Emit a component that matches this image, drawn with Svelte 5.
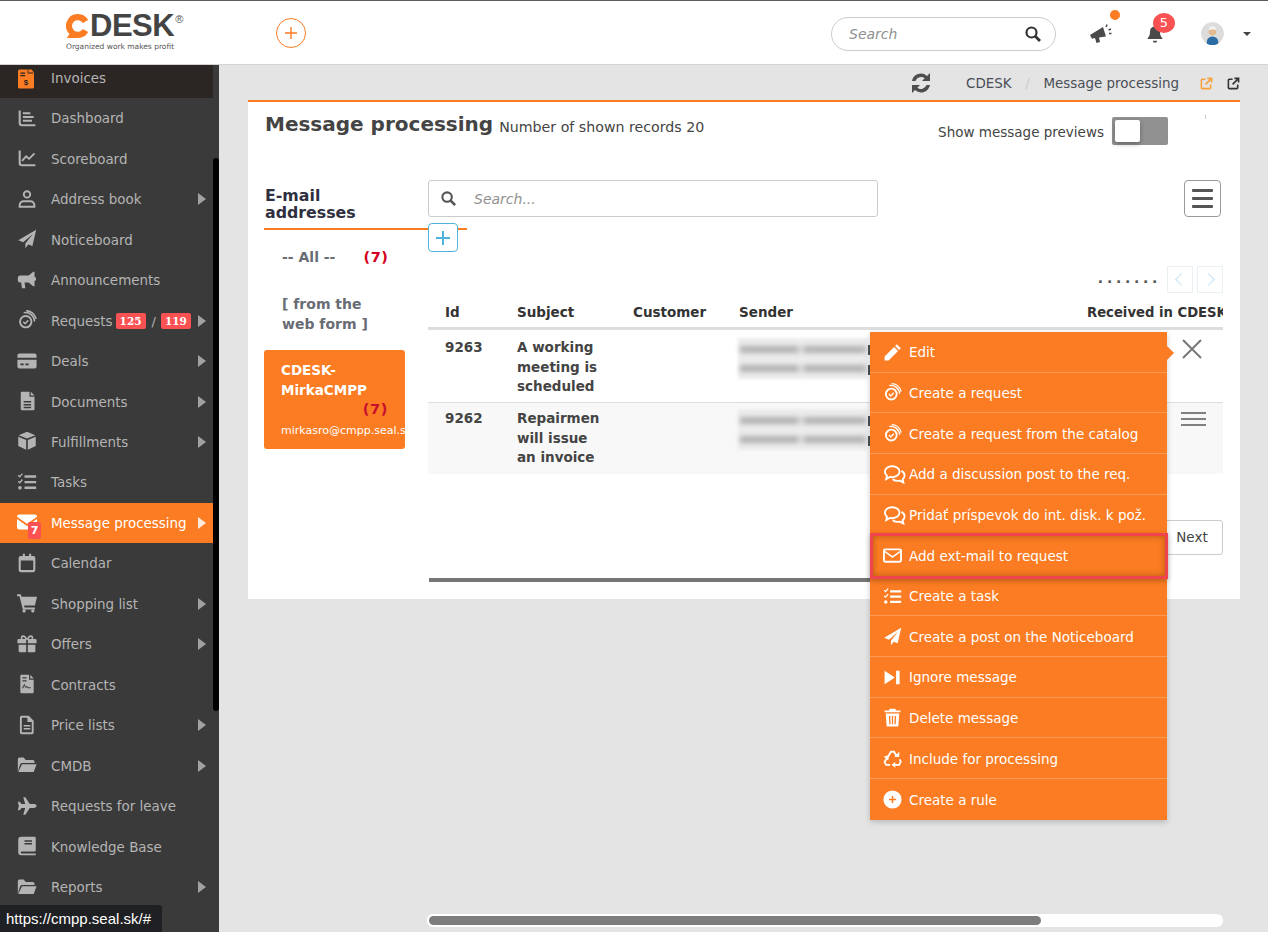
<script>
  const nav = [
    ['Dashboard', 'dash', 0], ['Scoreboard', 'score', 0], ['Address book', 'user', 1], ['Noticeboard', 'plane', 0],
    ['Announcements', 'mega', 0], ['Requests', 'req', 1], ['Deals', 'card', 1], ['Documents', 'doc', 1],
    ['Fulfillments', 'box', 1], ['Tasks', 'tasks', 0], ['Message processing', 'mail', 1], ['Calendar', 'cal', 0],
    ['Shopping list', 'cart', 1], ['Offers', 'gift', 1], ['Contracts', 'contract', 0], ['Price lists', 'pricelist', 1],
    ['CMDB', 'folder', 1], ['Requests for leave', 'jet', 0], ['Knowledge Base', 'book', 0], ['Reports', 'folder', 1]
  ];
  const menu = [
    ['Edit', 'pencil'], ['Create a request', 'req'], ['Create a request from the catalog', 'req'],
    ['Add a discussion post to the req.', 'chat'], ['Pridať príspevok do int. disk. k pož.', 'chat'],
    ['Add ext-mail to request', 'mailo'], ['Create a task', 'tasks'], ['Create a post on the Noticeboard', 'plane'],
    ['Ignore message', 'skip'], ['Delete message', 'trash'], ['Include for processing', 'recycle'], ['Create a rule', 'plus']
  ];
</script>

{#snippet icon(n)}
  <svg class="ic i-{n}" viewBox="0 0 24 24" fill="currentColor" aria-hidden="true">
    {#if n === 'dash'}
      <path d="M2 3h2.500v15a1.500 1.500 0 0 0 1.500 1.500h16v2.500H6a4 4 0 0 1-4-4z"/><path d="M7 5h9v2.500H7zM7 9.500h13V12H7zM7 14h11v2.500H7z"/>
    {:else if n === 'score'}
      <path d="M2 3h2.500v15a1.500 1.500 0 0 0 1.500 1.500h16v2.500H6a4 4 0 0 1-4-4z"/><path d="M6 15.500l5-5.500 3.500 3L21 6.500" fill="none" stroke="currentColor" stroke-width="2.200"/>
    {:else if n === 'user'}
      <path fill-rule="evenodd" d="M12 1.500a5 5 0 1 1 0 10 5 5 0 0 1 0-10zm0 2.300a2.700 2.700 0 1 0 0 5.400 2.700 2.700 0 0 0 0-5.400zM8 13.500h8a6 6 0 0 1 6 6v3H2v-3a6 6 0 0 1 6-6zm0 2.300a3.700 3.700 0 0 0-3.600 4.400h15.200a3.700 3.700 0 0 0-3.600-4.400z"/>
    {:else if n === 'plane'}
      <path d="M23 1 1.500 13.500l6 2.500L19 6 10 17.500V23l3.500-4.500 5 2z"/>
    {:else if n === 'mega'}
      <path d="M21 2h-1.500L14 6.500H4a3 3 0 0 0-3 3v2.500a3 3 0 0 0 3 3h1l1 7h4l-1-7h5l5.500 4.500H21v-6.200a2.700 2.700 0 0 0 0-5.200z"/>
    {:else if n === 'req'}
      <path fill-rule="evenodd" d="M10.500 6a8 8 0 1 1 0 16 8 8 0 0 1 0-16zm0 2.300a5.700 5.700 0 1 0 0 11.400 5.700 5.700 0 0 0 0-11.400z"/><path d="M7.500 14l2.300 2.300 3.800-4" fill="none" stroke="currentColor" stroke-width="1.800"/><path d="M8 3.200a11 11 0 0 1 13 10.500M11 .8a13 13 0 0 1 12 10" fill="none" stroke="currentColor" stroke-width="1.800"/>
    {:else if n === 'card'}
      <path fill-rule="evenodd" d="M3 3h18a2.500 2.500 0 0 1 2.500 2.500V8H.5V5.500A2.500 2.500 0 0 1 3 3zM.5 10.500h23v8A2.500 2.500 0 0 1 21 21H3a2.500 2.500 0 0 1-2.500-2.500zM4 15v2h4v-2zm6 0v2h4v-2z"/>
    {:else if n === 'doc'}
      <path fill-rule="evenodd" d="M6 1h9v6h6v14.500a1.500 1.500 0 0 1-1.500 1.500h-13.500a1.500 1.500 0 0 1-1.500-1.500V2.500A1.500 1.500 0 0 1 6 1zm2 11v1.800h9V12zm0 3.500v1.800h9v-1.800zm0 3.500v1.800h9V19z"/><path d="M16.500 1 21 5.500h-4.500z"/>
    {:else if n === 'box'}
      <path d="M12 1 2 5l10 4 10-4zM1.500 6.800V18l9.500 4.500V10.800zM22.500 6.800 13 10.800v11.700l9.500-4.500z"/>
    {:else if n === 'tasks'}
      <path d="M9 4h14v2.800H9zM9 10.800h14v2.800H9zM9 17.500h14v2.800H9z"/><path d="M1.500 4l1.800 1.800L6.500 2M1.500 11l1.800 1.800L6.500 9" fill="none" stroke="currentColor" stroke-width="1.600"/><circle cx="3.500" cy="19" r="2.200"/>
    {:else if n === 'mail'}
      <path d="M2.500 3h19A2.500 2.500 0 0 1 24 5.500v.3L12 14 0 5.800v-.3A2.500 2.500 0 0 1 2.500 3zM0 8.500l12 8.200 12-8.200v10A2.500 2.500 0 0 1 21.500 21h-19A2.500 2.500 0 0 1 0 18.500z"/>
    {:else if n === 'mailo'}
      <path fill-rule="evenodd" d="M3 3h18a3 3 0 0 1 3 3v12a3 3 0 0 1-3 3H3a3 3 0 0 1-3-3V6a3 3 0 0 1 3-3zm-.6 5.200v9.800c0 .4.200.6.600.6h18c.4 0 .6-.2.6-.6V8.200L12 15zM3 5.400c-.4 0-.6.200-.6.500L12 12.500l9.600-6.600c0-.3-.2-.5-.6-.5z"/>
    {:else if n === 'cal'}
      <path fill-rule="evenodd" d="M7 1h2.500v2.500h5V1H17v2.500h2.500A2.500 2.500 0 0 1 22 6v14.500a2.500 2.500 0 0 1-2.500 2.500h-15A2.500 2.500 0 0 1 2 20.500V6a2.500 2.500 0 0 1 2.500-2.500H7zM4.500 9v11.500h15V9z"/>
    {:else if n === 'cart'}
      <path d="M0 1.500h4.500l1 3H24l-2.500 10.500H8.500l.5 2.500h12.500v2.300H7L3 3.800H0z"/><circle cx="8.500" cy="21.500" r="2"/><circle cx="19" cy="21.500" r="2"/>
    {:else if n === 'gift'}
      <path fill-rule="evenodd" d="M7.500 1.500c2 0 3.500 1.500 4.500 4 1-2.500 2.500-4 4.500-4a3 3 0 0 1 2.700 4.500H22a1.500 1.500 0 0 1 1.500 1.500V11H13V7h-2v4H.5V7.500A1.500 1.500 0 0 1 2 6h2.800a3 3 0 0 1 2.700-4.500zm0 2a1 1 0 0 0 0 2.500H10c-.7-1.600-1.500-2.500-2.500-2.500zm9 0c-1 0-1.800.9-2.500 2.500h2.500a1 1 0 0 0 0-2.500zM2 13h9v9H3.500A1.500 1.500 0 0 1 2 20.500zm11 0h9v7.500a1.500 1.500 0 0 1-1.500 1.500H13z"/>
    {:else if n === 'contract'}
      <path fill-rule="evenodd" d="M5 1h9.500v6H20v14.500a1.500 1.500 0 0 1-1.500 1.500h-13.500A1.500 1.500 0 0 1 4 21.500V2A1 1 0 0 1 5 1zm1.500 3v1.500h5V4zm0 3.500V9h5V7.500zM7 17.500l2-3 1.500 2.500 1.500-1.500 1 1.500h3.500v-1.200h-3l-1.500-1.800-1.500 1.500L9 11.800l-3 5z"/><path d="M16 1l4 4.500h-4z"/>
    {:else if n === 'pricelist'}
      <path fill-rule="evenodd" d="M5.500 1H14l6 6v14a2 2 0 0 1-2 2H5.500a2 2 0 0 1-2-2V3a2 2 0 0 1 2-2zm.3 2.300V20.700h11.900V8.500h-5.200V3.300zM8 12h8v1.800H8zm0 3.500h8v1.800H8z"/>
    {:else if n === 'folder'}
      <path d="M1 20V5a2 2 0 0 1 2-2h5l2.500 3H19a2 2 0 0 1 2 2v1.500H6.500A3 3 0 0 0 3.800 11z"/><path d="M6 11h17.500L20 20.500H1.500z"/>
    {:else if n === 'jet'}
      <path d="M23.500 12c0-1.500-2-2.300-4-2.300h-4.200L10 1.500H7.500l2.300 8.200H5.500L3.200 7H1l1.200 5L1 17h2.200l2.300-2.700h4.300L7.500 22.500H10l5.300-8.200h4.200c2 0 4-.8 4-2.300z"/>
    {:else if n === 'book'}
      <path fill-rule="evenodd" d="M5 1h16a1.500 1.500 0 0 1 1.500 1.500v14.500a1.500 1.500 0 0 1-1.500 1.500H5.500a1.300 1.300 0 0 0 0 2.500H22.500V23H5a3.500 3.500 0 0 1-3.500-3.500v-15A3.500 3.500 0 0 1 5 1zm4 4v1.800h9V5zm0 3.500v1.800h9V8.500z"/>
    {:else if n === 'pencil'}
      <path d="M17.500 1.500 22.500 6.500l-2.200 2.200-5-5zM14 5l5 5L7 22H2v-5z"/>
    {:else if n === 'chat'}
      <g fill="none" stroke="currentColor" stroke-width="2"><path d="M9.500 3.500c4.400 0 8 2.700 8 6s-3.600 6-8 6c-.9 0-1.800-.1-2.600-.3L3 17.500l.8-3.600C2.400 12.800 1.500 11.200 1.500 9.500c0-3.300 3.600-6 8-6z"/><path d="M19.500 8.500c2.300 1 3.500 3 3.500 5 0 1.700-.8 3.100-2.100 4.200l.8 3.600-3.900-2.100c-2.800.7-5.800.2-7.800-1.500"/></g>
    {:else if n === 'skip'}
      <path d="M2 3.500 15 12 2 20.500zM16.500 3.500H21v17h-4.500z"/>
    {:else if n === 'trash'}
      <path fill-rule="evenodd" d="M8.500 1h7l1 2H22v2.500H2V3h5.500zM3.500 7h17l-1 15a1.500 1.500 0 0 1-1.500 1.500H6A1.500 1.500 0 0 1 4.500 22zM7.500 10l.4 10.500h1.600L9.200 10zm3.700 0v10.500h1.600V10zm3.600 0-.3 10.500h1.600l.4-10.500z"/>
    {:else if n === 'recycle'}
      <g fill="none" stroke="currentColor" stroke-width="2.300"><path d="M7 8.500 10 3.500h4l3 5"/><path d="M21 13l1.500 3-2 4h-5.500"/><path d="M9 20H4l-2-3.500 2.500-4.500"/></g><path d="M14 9.800 20.500 10l.2-6.500zM15.500 16.300v7.400L10.800 20zM1 9.500l7 -1.800-1.500 6.800z"/>
    {:else if n === 'plus'}
      <path fill-rule="evenodd" d="M12 .5a11.500 11.500 0 1 1 0 23 11.500 11.500 0 0 1 0-23zM11 7.500v3.500H7.500v2H11v3.500h2V13h3.500v-2H13V7.500z"/>
    {/if}
  </svg>
{/snippet}

<div class="page">
  <header class="top">
    <div class="logo">
      <div class="brand">
        <svg class="c" viewBox="0 0 26 26"><path d="M13 0a12.500 12.500 0 0 1 11 6.500L18.200 9.700A6.300 6.300 0 1 0 18.200 16.300l5.800 3.200A12.500 12.500 0 0 1 13 26H1l2.700-4.200A12.800 12.800 0 0 1 13 0z" fill="#fb7c22"/></svg><span class="desk">DESK</span><sup>®</sup>
      </div>
      <div class="tag">Organized work makes profit</div>
    </div>
    <button class="add" aria-label="Add"><svg viewBox="0 0 14 14"><path d="M7 1v12M1 7h12" stroke="#fb7c22" stroke-width="1.400" fill="none"/></svg></button>
    <div class="tools">
      <div class="gsearch"><em>Search</em>
        <svg viewBox="0 0 18 18"><circle cx="7.500" cy="7.500" r="5" fill="none" stroke="#333" stroke-width="2.200"/><path d="M11.300 11.300 16 16" stroke="#333" stroke-width="2.800"/></svg>
      </div>
      <div class="bell mega"><svg viewBox="0 0 24 24"><path d="M1 13 14 5l3 9.500-7 1 1 4.500-3.500 1-1.500-5-3 .8z" fill="#4a4a4a"/><path d="M17 5l1-2.500M19.500 8l2.500-1M20 11.500h2.500" stroke="#4a4a4a" stroke-width="1.500"/></svg><i class="dot"></i></div>
      <div class="bell notif"><svg viewBox="0 0 24 24"><path d="M12 1.500c.8 0 1.300.6 1.300 1.400 3 .7 4.700 3 4.700 6 0 5 1.300 6.300 2.800 8v1.100H3.200v-1.100c1.500-1.700 2.800-3 2.800-8 0-3 1.700-5.300 4.700-6 0-.8.500-1.400 1.300-1.400zM9.500 20h5a2.500 2.500 0 0 1-5 0z" fill="#4a4a4a"/></svg><b class="count">5</b></div>
      <div class="avatar"><svg viewBox="0 0 24 24"><circle cx="12" cy="12" r="12" fill="#dcdcdc"/><circle cx="12" cy="10" r="4" fill="#e3b98f"/><path d="M8 9c0-3 2-4.500 4-4.500s4 1.500 4 4.500c-1-1.500-7-1.500-8 0z" fill="#f3f3f3"/><path d="M6 24v-3a6 6 0 0 1 12 0v3z" fill="#2b6ca3"/></svg></div>
      <i class="caret"></i>
    </div>
  </header>

  <div class="body">
    <aside class="side">
      <div class="scroll"></div>
      <div class="item invoices">
        <svg class="inv" viewBox="2 0 20 24"><path fill="#fb7c22" d="M4 0h15l3 4v18a2 2 0 0 1-2 2H4a2 2 0 0 1-2-2V2a2 2 0 0 1 2-2z"/><path fill="#2b2523" d="M14 0h1v4h6v1h-7zM5 4h6v1.500H5zM5 7h6v1.500H5z"/><text x="12" y="20" font-size="10" font-weight="700" text-anchor="middle" fill="#2b2523" font-family="Liberation Sans">$</text></svg>
        <span>Invoices</span>
      </div>
      {#each nav as [label, ic, arrow]}
        <div class="item" class:on={label === 'Message processing'}>
          <span class="icw">{@render icon(ic)}{#if ic === 'mail'}<b class="mbadge">7</b>{/if}</span>
          <span>{label}</span>
          {#if label === 'Requests'}<b class="rb">125</b><span class="sl">/</span><b class="rb">119</b>{/if}
          {#if arrow}<i class="arr"></i>{/if}
        </div>
      {/each}
      <div class="status">https://cmpp.seal.sk/#</div>
    </aside>

    <main class="main">
      <div class="crumbs">
        <svg class="refresh" viewBox="0 0 24 24"><path d="M3 10a9 9 0 0 1 15-5l3-3v8h-8l2.700-2.700A6 6 0 0 0 6.500 10zM21 14a9 9 0 0 1-15 5l-3 3v-8h8l-2.700 2.700A6 6 0 0 0 17.500 14z" fill="#4e4e4e"/></svg>
        <span class="c1">CDESK</span><span class="slash">/</span><span class="c2">Message processing</span>
        <svg class="ext or" viewBox="0 0 14 14"><path d="M6 2.500H2.500a1 1 0 0 0-1 1v8a1 1 0 0 0 1 1h8a1 1 0 0 0 1-1V8M8 1.500h4.500V6M12.500 1.500 6 8" fill="none" stroke="currentColor" stroke-width="1.700"/></svg>
        <svg class="ext" viewBox="0 0 14 14"><path d="M6 2.500H2.500a1 1 0 0 0-1 1v8a1 1 0 0 0 1 1h8a1 1 0 0 0 1-1V8M8 1.500h4.500V6M12.500 1.500 6 8" fill="none" stroke="currentColor" stroke-width="1.700"/></svg>
      </div>
      <section class="panel">
        <div class="phead">
          <h1>Message processing</h1><span class="shown">Number of shown records 20</span>
          <div class="prev"><span>Show message previews</span><div class="toggle"><i></i></div></div>
        </div>
        <div class="cols">
          <div class="left">
            <h2>E-mail addresses</h2>
            <div class="acc all"><span>-- All --</span><b class="n">(7)</b></div>
            <div class="acc web">[ from the web form ]</div>
            <div class="acc sel">
              <strong>CDESK-MirkaCMPP</strong>
              <b class="n">(7)</b>
              <small>mirkasro@cmpp.seal.sk</small>
            </div>
          </div>
          <div class="right">
            <div class="srow">
              <div class="search">
                <svg viewBox="0 0 18 18"><circle cx="7.500" cy="7.500" r="5" fill="none" stroke="#555" stroke-width="2.200"/><path d="M11.300 11.300 16 16" stroke="#555" stroke-width="2.800"/></svg>
                <em>Search...</em>
              </div>
              <button class="ham" aria-label="Menu"><i></i><i></i><i></i></button>
            </div>
            <button class="plusb" aria-label="Add"><svg viewBox="0 0 14 14"><path d="M7 0v14M0 7h14" stroke="#4fb3d9" stroke-width="2" fill="none"/></svg></button>
            <div class="pager"><span class="dots">.......</span><span class="pg"><i class="l"></i></span><span class="pg"><i class="r"></i></span></div>
            <div class="table">
              <div class="tr th">
                <div class="c-id">Id</div><div class="c-sub">Subject</div><div class="c-cus">Customer</div><div class="c-sen">Sender</div><div class="c-rec">Received in CDESK</div>
              </div>
              <div class="tr r1">
                <div class="c-id">9263</div><div class="c-sub"><span>A working meeting is scheduled</span></div><div class="c-cus"></div><div class="c-sen"><div class="blur"><i></i><i></i></div></div>
                <svg class="x" viewBox="0 0 20 20"><path d="M1 1l18 18M19 1 1 19" stroke="#777" stroke-width="2" fill="none"/></svg>
              </div>
              <div class="tr r2">
                <div class="c-id">9262</div><div class="c-sub"><span>Repairmen will issue an invoice</span></div><div class="c-cus"></div><div class="c-sen"><div class="blur"><i></i><i></i></div></div>
                <div class="lines"><i></i><i></i><i></i></div>
              </div>
            </div>
            <div class="next"><span>Next</span></div>
            <div class="hbar"></div>
          </div>
        </div>
      </section>
      <div class="menu">
        <span class="tip"></span>
        {#each menu as [label, ic]}
          <div class="mi" class:hl={ic === 'mailo'}>{@render icon(ic)}<span>{label}</span></div>
        {/each}
      </div>
      <div class="bottombar"><i></i></div>
    </main>
  </div>
</div>

<style>
  :global(body) { margin: 0; background: #e4e4e4; overflow: hidden; }
  .page { width: 1268px; height: 932px; overflow: hidden; font-family: "DejaVu Sans", sans-serif; font-size: 13.5px; display: flex; flex-direction: column; }
  svg { display: block; }
  .top { height: 63px; flex: none; background: #fff; border-top: 1px solid #5c5c5c; border-bottom: 1px solid #d4d4d4; display: flex; align-items: center; position: relative; z-index: 3; }
  .logo { margin-left: 66px; width: 210px; }
  .brand { display: flex; align-items: flex-start; height: 25px; padding-top: 1px; }
  .c { width: 24px; height: 24px; flex: none; }
  .desk { font: 700 31px/24px "Liberation Sans", sans-serif; color: #444; letter-spacing: -.5px; }
  sup { font: 11px/10px "Liberation Sans", sans-serif; color: #555; margin-left: 1px; }
  .tag { font: 7.500px/12px "DejaVu Sans", sans-serif; color: #555; margin-top: 2px; white-space: nowrap; }
  .add { width: 30px; height: 30px; border-radius: 50%; border: 1px solid #fb7c22; background: #fff; padding: 7px; box-sizing: border-box; }
  .tools { margin-left: auto; display: flex; align-items: center; padding-top: 2px; }
  .gsearch { width: 225px; height: 34px; box-sizing: border-box; border: 1px solid #ccc; border-radius: 17px; display: flex; align-items: center; justify-content: space-between; padding: 0 13px 0 17px; color: #909090; font-size: 14px; }
  .gsearch svg { width: 18px; height: 18px; }
  .bell { position: relative; width: 24px; height: 24px; }
  .bell.mega { margin-left: 33px; }
  .bell.notif { margin-left: 32px; width: 20px; height: 20px; }
  .dot { position: absolute; width: 10px; height: 10px; background: #fb7c22; border-radius: 50%; left: 21px; top: -12px; }
  .count { position: absolute; left: 8px; top: -11px; width: 22px; height: 20px; border-radius: 50%; background: #fa5252; color: #fff; font: 400 13px/20px "DejaVu Sans", sans-serif; text-align: center; }
  .avatar { width: 23px; height: 23px; margin-left: 36px; }
  .avatar svg { border-radius: 50%; }
  .caret { width: 0; height: 0; border: 4px solid transparent; border-top: 4px solid #444; border-bottom: 0; margin: 0 17px 0 19px; }
  .body { flex: 1; display: flex; min-height: 0; position: relative; }
  .side { width: 219px; flex: none; background: #3a3a3a; color: #b4b4b4; position: relative; overflow: hidden; font-size: 13.450px; }
  .scroll { position: absolute; right: 0; top: 93px; width: 6px; height: 553px; background: #000; border-radius: 3px; z-index: 2; }
  .item { height: 40.470px; box-sizing: border-box; display: flex; align-items: center; padding: 1px 0 0 17px; position: relative; width: 213px; white-space: nowrap; }
  .invoices { height: 33px; background: #2b2523; padding: 0 0 7px 18px; }
  .inv { width: 16px; height: 20px; margin-right: 17px; margin-top: 2px; }
  .icw { position: relative; display: block; width: 22px; height: 22px; flex: none; margin-right: 12px; }
  .ic { width: 20px; height: 20px; }
  .item.on { background: #fb7c22; color: #fff; }
  .mbadge { position: absolute; left: 11px; top: 10px; width: 13px; height: 17px; background: #fa5252; border-radius: 2px; color: #fff; font: 700 11px/17px "DejaVu Sans", sans-serif; text-align: center; }
  .rb { background: #fa5252; color: #fff; font: 700 10.500px/16px "DejaVu Serif", serif; height: 16px; padding: 0 4px; border-radius: 2px; margin-left: 3px; }
  .sl { margin: 0 5px 0 6px; font-size: 13px; }
  .rb + .sl + .rb { margin-left: 0; }
  .arr { position: absolute; right: 7px; top: 50%; margin-top: -6px; border-left: 8px solid currentColor; border-top: 6px solid transparent; border-bottom: 6px solid transparent; opacity: .85; }
  .status { position: absolute; left: 0; bottom: 0; width: 162px; height: 27px; box-sizing: border-box; background: #1f2023; color: #fff; font: 15px/27px "Liberation Sans", sans-serif; padding-left: 6px; border-top-right-radius: 3px; z-index: 3; white-space: nowrap; }
  .main { flex: 1; position: relative; min-width: 0; }
  .crumbs { height: 35px; display: flex; align-items: center; width: 1021px; color: #4a4f57; font-size: 13.450px; padding-top: 1px; box-sizing: border-box; position: relative; white-space: nowrap; }
  .refresh { width: 24px; height: 24px; margin-left: 690px; flex: none; }
  .c1 { margin-left: 33px; }
  .slash { color: #ccc; width: 32px; text-align: center; }
  .ext { width: 13px; height: 13px; color: #333; margin-left: 14px; flex: none; }
  .ext.or { color: #f7a23b; margin-left: 21px; }
  .panel { margin-left: 29px; width: 992px; height: 499px; box-sizing: border-box; background: #fff; border-top: 2px solid #fb7c22; padding: 0 17px; position: relative; color: #444; }
  .panel::after { content: ""; position: absolute; left: 957px; top: 13px; width: 1px; height: 4px; background: #ccc; }
  .phead { display: flex; align-items: baseline; height: 78px; padding-top: 9px; box-sizing: border-box; position: relative; }
  h1 { font-size: 20px; line-height: 26px; margin: 0; font-weight: 700; color: #444; white-space: nowrap; }
  .shown { margin-left: 6px; font-size: 14.200px; position: relative; top: 1px; }
  .prev { position: absolute; right: 55px; top: 15px; display: flex; align-items: center; gap: 8px; font-size: 13.500px; }
  .prev span { position: relative; top: 1px; }
  .toggle { width: 56px; height: 28px; background: #919191; border-radius: 2px; padding: 3px; box-sizing: border-box; }
  .toggle i { display: block; width: 25px; height: 22px; background: #fff; border-radius: 2px; box-shadow: 0 2px 5px rgba(0,0,0,.3); }
  .cols { display: flex; }
  .left { width: 163px; flex: none; }
  h2 { font-size: 15.800px; line-height: 17px; margin: 0 0 0 -1px; padding: 7px 61px 7px 1px; border-bottom: 2px solid #fb7c22; font-weight: 700; color: #2f2f3f; width: 141px; box-sizing: content-box; }
  .acc { font-weight: 700; color: #686c74; position: relative; }
  .n { color: #d4001c; letter-spacing: .6px; font-size: 14.500px; }
  .all { padding: 18px 0 0 17px; height: 28px; display: flex; gap: 28px; font-size: 14px; line-height: 18px; white-space: nowrap; }
  .web { padding: 18px 0 0 17px; font-size: 14px; line-height: 20px; width: 105px; height: 46px; }
  .sel { margin: 10px 0 0 -1px; width: 141px; height: 99px; box-sizing: border-box; background: #fb7c22; border-radius: 3px; color: #fff; padding: 11px 0 0 17px; overflow: hidden; line-height: 19.500px; font-size: 13.500px; }
  .sel strong { display: block; width: 100px; }
  .sel .n { display: block; color: #c8102e; text-align: right; width: 107px; height: 21px; }
  .sel small { font-size: 11px; font-weight: 400; white-space: nowrap; display: block; line-height: 20px; }
  .right { width: 795px; flex: none; position: relative; }
  .srow { display: flex; justify-content: space-between; }
  .search { width: 450px; height: 37px; border: 1px solid #ccc; border-radius: 3px; box-sizing: border-box; display: flex; align-items: center; padding-left: 11px; color: #909090; font-size: 14px; }
  .search svg { width: 17px; height: 17px; margin-right: 17px; }
  .ham { width: 37px; height: 37px; margin-right: 2px; background: #fff; border: 1px solid #999; border-radius: 4px; padding: 0; display: flex; flex-direction: column; gap: 5px; align-items: center; justify-content: center; }
  .ham i { display: block; width: 21px; height: 3px; background: #555; border-radius: 1px; }
  .plusb { display: block; width: 30px; height: 29px; margin-top: 6px; padding: 7px; background: #fff; border: 1px solid #4fb3d9; border-radius: 4px; box-sizing: border-box; }
  .pager { display: flex; justify-content: flex-end; align-items: center; height: 27px; margin-top: 14px; gap: 4px; }
  .dots { font-size: 14px; font-weight: 700; color: #555; letter-spacing: 3.700px; position: relative; top: -2px; margin-right: 2px; }
  .pg { width: 26px; height: 27px; border: 1px solid #eaf1f4; box-sizing: border-box; display: flex; align-items: center; justify-content: center; }
  .pg i { width: 8px; height: 8px; border-left: 1.500px solid #c3e3f3; border-top: 1.500px solid #c3e3f3; }
  .pg .l { transform: rotate(-45deg); margin-left: 3px; }
  .pg .r { transform: rotate(135deg); margin-right: 3px; }
  .table { margin-top: 3px; font-size: 13.500px; font-weight: 700; line-height: 19.500px; color: #444; width: 795px; }
  .tr { display: flex; position: relative; box-sizing: border-box; }
  .th { height: 34px; border-bottom: 3px solid #ddd; color: #333; padding-top: 7px; overflow: hidden; white-space: nowrap; }
  .c-id { width: 89px; padding-left: 17px; box-sizing: border-box; flex: none; }
  .c-sub { width: 116px; flex: none; }
  .c-sub span { display: block; width: 90px; }
  .c-cus { width: 106px; flex: none; }
  .c-sen { width: 348px; flex: none; position: relative; }
  .c-rec { flex: none; font-size: 13.200px; }
  .r1 { height: 73px; padding-top: 8px; border-bottom: 1px solid #ddd; }
  .r2 { height: 71px; padding-top: 6px; background: #f8f8f8; }
  .blur { width: 130px; height: 41px; margin-left: -1px; display: flex; flex-direction: column; justify-content: center; gap: 12px; background: #ececec; filter: blur(1.500px); }
  .blur i { height: 7px; background: linear-gradient(90deg, #b0b0b0 0 45%, #d8d8d8 47% 50%, #b0b0b0 52%); filter: blur(2px); margin: 0 2px; }
  .r1 .c-sen::after, .r2 .c-sen::after { content: ""; position: absolute; left: 129px; top: 7px; width: 2px; height: 32px; background: repeating-linear-gradient(#4a4f57 0 10px, transparent 10px 20px); }
  .x { position: absolute; left: 754px; top: 9px; width: 20px; height: 20px; }
  .lines { position: absolute; left: 753px; top: 9px; display: flex; flex-direction: column; gap: 4px; }
  .lines i { display: block; width: 25px; height: 2px; background: #808080; }
  .next { display: flex; justify-content: flex-end; margin-top: 46px; }
  .next span { width: 60px; height: 35px; border: 1px solid #ccc; border-radius: 3px; box-sizing: border-box; line-height: 33px; text-align: center; font-size: 13.500px; color: #444; padding-right: 2px; }
  .hbar { height: 4px; background: #777; width: 500px; margin: 23px 0 0 1px; }
  .menu { position: absolute; left: 651px; top: 267px; width: 297px; background: #fb7c22; color: #fff; box-shadow: 0 2px 6px rgba(0,0,0,.2); z-index: 4; }
  .tip { position: absolute; right: -7px; top: 14px; width: 0; height: 0; border-left: 7px solid #fb7c22; border-top: 7px solid transparent; border-bottom: 7px solid transparent; }
  .mi { height: 40.640px; box-sizing: border-box; display: flex; align-items: center; padding: 1px 0 0 13px; border-bottom: 1px solid #fd9a54; font-size: 13.500px; white-space: nowrap; position: relative; }
  .mi .ic { width: 19px; height: 19px; flex: none; margin-right: 7px; }
  .mi .ic.i-chat { width: 23px; height: 22px; margin-right: 3px; }
  .mi:last-child { border-bottom: 0; }
  .mi.hl { border-bottom: 0; }
  .mi.hl::after { content: ""; position: absolute; left: 0; right: -1px; top: -2px; bottom: -3px; border: 3px solid #f0444c; box-shadow: inset 0 0 6px rgba(120,60,0,.55), 0 2px 5px rgba(0,0,0,.25); z-index: 1; }
  .bottombar { position: absolute; left: 208px; top: 849px; width: 796px; height: 13px; padding: 2px; box-sizing: border-box; background: #fff; border-radius: 6px; overflow: hidden; }
  .bottombar i { display: block; width: 612px; height: 9px; background: #7d7d7d; border-radius: 5px; }
</style>
